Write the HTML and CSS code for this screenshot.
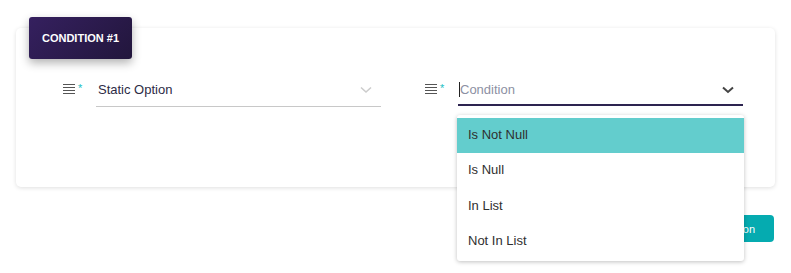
FILE: index.html
```html
<!DOCTYPE html>
<html lang="en">
<head>
    <meta charset="UTF-8">
    <meta name="viewport" content="width=device-width, initial-scale=1.0">
    <title>Conditions</title>
    <link rel="stylesheet" href="styles.css">
</head>
<body>
    <div class="page">
        <div class="condition-card">
            <div class="card-badge">CONDITION #1</div>
            <div class="field-row">
                <div class="field">
                    <span class="field-icon">
                        <svg width="12" height="10" viewBox="0 0 12 10"><path d="M0 0.5H12M0 3.5H12M0 6.5H12M0 9.5H12" stroke="#555" stroke-width="1"/></svg>
                        <span class="required">*</span>
                    </span>
                    <div class="select">
                        <span class="select-value">Static Option</span>
                        <svg class="chevron" width="12" height="8" viewBox="0 0 12 8"><path d="M1 1.5L6 6L11 1.5" fill="none" stroke="#ccc" stroke-width="1.6"/></svg>
                    </div>
                </div>
                <div class="field">
                    <span class="field-icon">
                        <svg width="12" height="10" viewBox="0 0 12 10"><path d="M0 0.5H12M0 3.5H12M0 6.5H12M0 9.5H12" stroke="#555" stroke-width="1"/></svg>
                        <span class="required">*</span>
                    </span>
                    <div class="select select-open">
                        <span class="caret"></span>
                        <span class="select-placeholder">Condition</span>
                        <svg class="chevron" width="12" height="8" viewBox="0 0 12 8"><path d="M1 1.5L6 6L11 1.5" fill="none" stroke="#444" stroke-width="2"/></svg>
                        <ul class="dropdown">
                            <li class="active">Is Not Null</li>
                            <li>Is Null</li>
                            <li>In List</li>
                            <li>Not In List</li>
                        </ul>
                    </div>
                </div>
            </div>
        </div>
        <div class="actions">
            <button class="add-btn">Add Condition</button>
        </div>
    </div>
</body>
</html>
```

FILE: styles.css
```css
body {
    margin: 0;
    padding: 0;
    background: #fff;
    font-family: 'Liberation Sans', Arial, sans-serif;
    color: #333;
}

.page {
    min-height: 273px;
    box-sizing: border-box;
    padding: 28px 16px 0 16px;
}

.condition-card {
    position: relative;
    height: 159px;
    box-sizing: border-box;
    padding: 45px 32px 0 47px;
    background: #fff;
    border-radius: 5px;
    box-shadow: 0 1px 4px rgba(0, 0, 0, 0.13);
}

.card-badge {
    position: absolute;
    left: 13px;
    top: -11px;
    width: 103px;
    height: 42px;
    display: flex;
    align-items: center;
    justify-content: center;
    background: linear-gradient(135deg, #35205f, #22163c);
    color: #fff;
    font-size: 11px;
    font-weight: bold;
    border-radius: 3px;
    box-shadow: 0 4px 10px rgba(0, 0, 0, 0.3);
}

.field-row {
    display: flex;
    gap: 44px;
}

.field {
    display: flex;
    width: 318px;
}

.field-icon {
    width: 33px;
    display: flex;
    align-items: flex-start;
    padding-top: 11px;
}

.required {
    color: #1bbfc4;
    font-size: 11px;
    line-height: 8px;
    margin-left: 3px;
}

.select {
    position: relative;
    flex: 1;
    height: 33px;
    display: flex;
    align-items: center;
    padding-left: 2px;
    border-bottom: 1px solid #c8c8c8;
    font-size: 13px;
}

.select-value {
    flex: 1;
    color: #2d2b45;
}

.select .chevron {
    margin-right: 9px;
    margin-top: 1px;
}

.select-open {
    height: 29px;
    padding-top: 2px;
    border-bottom: 2px solid #2d2450;
    padding-left: 1px;
}

.caret {
    width: 1px;
    height: 15px;
    background: #222;
}

.select-placeholder {
    flex: 1;
    color: #8c90a3;
}

.dropdown {
    position: absolute;
    left: -1px;
    top: 42px;
    width: 287px;
    margin: 0;
    padding: 3px 0 2px 0;
    list-style: none;
    background: #fff;
    border-radius: 3px;
    box-shadow: 0 1px 4px rgba(0, 0, 0, 0.25);
    z-index: 2;
}

.dropdown li {
    height: 35.3px;
    line-height: 33px;
    padding-left: 11px;
    font-size: 13px;
    color: #2f2f2f;
}

.dropdown li.active {
    background: #63cdcd;
}

.actions {
    display: flex;
    justify-content: flex-end;
    padding-top: 28px;
    padding-right: 1px;
}

.add-btn {
    height: 27px;
    padding: 0 19px;
    border: none;
    border-radius: 4px;
    background: #05abb0;
    color: #fff;
    font-family: 'Liberation Sans', Arial, sans-serif;
    font-size: 11px;
}
```
